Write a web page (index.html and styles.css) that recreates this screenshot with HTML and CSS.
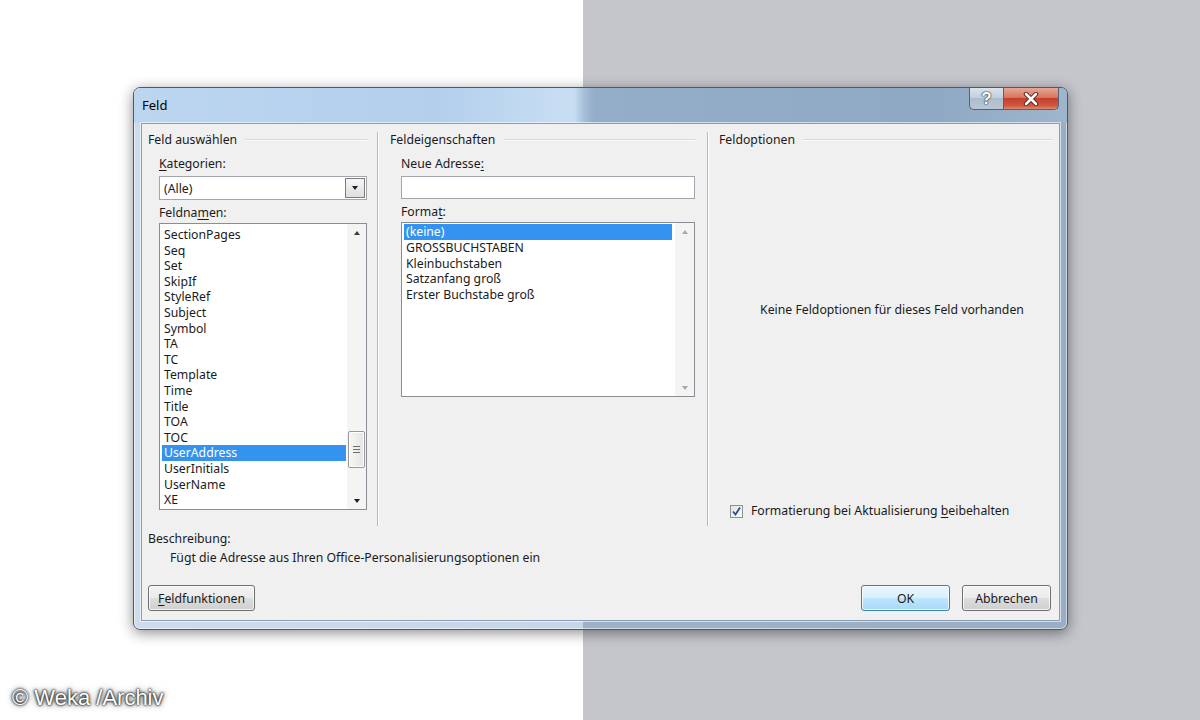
FILE: index.html
```html
<!DOCTYPE html>
<html lang="de">
<head>
  <meta charset="UTF-8" />
  <meta name="viewport" content="width=device-width, initial-scale=1.0"/>
  <title>Feld</title>
  <link rel="stylesheet" href="styles.css">
</head>
<body>

  <div class="dialog">
    <div class="titlebar">
      <span class="title">Feld</span>
      <div class="caption-buttons">
        <button class="cap-btn cap-help">?</button>
        <button class="cap-btn cap-close">
          <svg width="16" height="14" viewBox="0 0 16 14">
            <path d="M3 2 L13 12 M13 2 L3 12" stroke="#5a1d14" stroke-width="4.5" stroke-linecap="round"/>
            <path d="M3 2 L13 12 M13 2 L3 12" stroke="#ffffff" stroke-width="2.6" stroke-linecap="round"/>
          </svg>
        </button>
      </div>
    </div>

    <div class="client">
      <div class="groups">

        <!-- Feld auswählen -->
        <section class="group group-select">
          <div class="group-title">Feld auswählen</div>
          <div class="group-body">
            <div class="field-label"><u>K</u>ategorien:</div>
            <div class="combo">
              <span>(Alle)</span>
              <span class="combo-btn"><span class="tri-down"></span></span>
            </div>
            <div class="field-label label-gap">Feldna<u>m</u>en:</div>
            <div class="listbox names">
              <ul class="items">
                <li>SectionPages</li>
                <li>Seq</li>
                <li>Set</li>
                <li>SkipIf</li>
                <li>StyleRef</li>
                <li>Subject</li>
                <li>Symbol</li>
                <li>TA</li>
                <li>TC</li>
                <li>Template</li>
                <li>Time</li>
                <li>Title</li>
                <li>TOA</li>
                <li>TOC</li>
                <li class="selected">UserAddress</li>
                <li>UserInitials</li>
                <li>UserName</li>
                <li>XE</li>
              </ul>
              <div class="scrollbar">
                <div class="sb-arrow"><span class="tri-up"></span></div>
                <div class="sb-track">
                  <div class="sb-thumb names-thumb"><span class="grip"></span></div>
                </div>
                <div class="sb-arrow"><span class="tri-down"></span></div>
              </div>
            </div>
          </div>
        </section>

        <!-- Feldeigenschaften -->
        <section class="group group-props">
          <div class="group-title">Feldeigenschaften</div>
          <div class="group-body">
            <div class="field-label">Neue Adresse<u>:</u></div>
            <div class="textbox"></div>
            <div class="field-label label-gap">Forma<u>t</u>:</div>
            <div class="listbox formats">
              <ul class="items">
                <li class="selected">(keine)</li>
                <li>GROSSBUCHSTABEN</li>
                <li>Kleinbuchstaben</li>
                <li>Satzanfang groß</li>
                <li>Erster Buchstabe groß</li>
              </ul>
              <div class="scrollbar disabled">
                <div class="sb-arrow"><span class="tri-up"></span></div>
                <div class="sb-track"></div>
                <div class="sb-arrow"><span class="tri-down"></span></div>
              </div>
            </div>
          </div>
        </section>

        <!-- Feldoptionen -->
        <section class="group group-options">
          <div class="group-title">Feldoptionen</div>
          <div class="group-body">
            <div class="no-options">Keine Feldoptionen für dieses Feld vorhanden</div>
            <label class="check-row">
              <span class="checkbox">
                <svg width="11" height="11" viewBox="0 0 11 11">
                  <path d="M2 5.5 L4.5 8.5 L9 1.5" fill="none" stroke="#2b4f8c" stroke-width="1.8"/>
                </svg>
              </span>
              <span>Formatierung bei Aktualisierung <u>b</u>eibehalten</span>
            </label>
          </div>
        </section>
      </div>

      <div class="desc-title">Beschreibung:</div>
      <div class="desc-text">Fügt die Adresse aus Ihren Office-Personalisierungsoptionen ein</div>

      <div class="button-row">
        <button class="btn btn-wide"><u>F</u>eldfunktionen</button>
        <button class="btn btn-default push-right">OK</button>
        <button class="btn">Abbrechen</button>
      </div>
    </div>
  </div>

  <div class="watermark">© Weka /Archiv</div>

</body>
</html>
```

FILE: styles.css
```css
* {
  box-sizing: border-box;
}

body {
  margin: 0;
  height: 720px;
  overflow: hidden;
  font-family: 'Segoe UI', 'Noto Sans', sans-serif;
  font-size: 12.25px;
  color: #1a1a1a;
  background: linear-gradient(to right, #ffffff 0, #ffffff 583px, #c4c6cc 583px);
}

u {
  text-decoration: underline;
  text-underline-offset: 2px;
}

/* window frame */
.dialog {
  width: 935px;
  height: 543px;
  margin: 87px 0 0 133px;
  padding: 0 7px 8px;
  border: 1px solid #4b5a6b;
  border-radius: 7px;
  background: linear-gradient(to right, #cddcec 0, #c5d6e8 449px, #9db1c8 449px, #99aec6 100%);
  box-shadow: 0 3px 14px rgba(0, 0, 0, 0.45), inset 0 0 0 1px rgba(255, 255, 255, 0.55);
  display: flex;
  flex-direction: column;
}

.titlebar {
  height: 35px;
  margin: 0 -7px;
  padding: 0 8px 0 8px;
  display: flex;
  justify-content: space-between;
  border-radius: 6px 6px 0 0;
  background: linear-gradient(to right, #bcd6f0 0, #b3cfec 300px, #c8def3 440px, #a9c1da 449px, #94adc8 460px, #8fa8c3 800px, #9fb5cd 100%);
}

.title {
  padding-top: 9px;
  line-height: 16px;
  font-size: 13px;
  color: #000;
}

.caption-buttons {
  display: flex;
  height: 22px;
}

.cap-btn {
  height: 22px;
  border: 1px solid #4f6479;
  border-top: none;
  padding: 0;
  display: flex;
  align-items: center;
  justify-content: center;
  font-family: 'Liberation Sans', sans-serif;
}

.cap-help {
  width: 34px;
  border-right: none;
  border-radius: 0 0 0 5px;
  background: linear-gradient(#dbe3ec 0, #c4d0dd 45%, #aebdcd 50%, #b9c7d6 100%);
  color: #fff;
  font-size: 17px;
  font-weight: bold;
  text-shadow: 0 0 2px #2d3f52, 0 0 1px #2d3f52, 0 0 1px #2d3f52;
}

.cap-close {
  width: 56px;
  border-radius: 0 0 5px 0;
  background: linear-gradient(#e9a596 0, #d87561 45%, #c3402a 50%, #cf5a41 85%, #e08c70 100%);
}

/* client area */
.client {
  flex: 1;
  background: #f0f0f0;
  border: 1px solid #8b9cb0;
  box-shadow: 0 0 0 1px rgba(255, 255, 255, 0.6);
  padding: 8px 7px 9px 6px;
  display: flex;
  flex-direction: column;
}

.groups {
  display: flex;
  height: 394px;
}

.group {
  display: flex;
  flex-direction: column;
}

.group-select {
  width: 229px;
  padding-right: 10px;
}

.group-props {
  width: 330px;
  padding: 0 12px;
  border-left: 1px solid #b9b9b9;
  box-shadow: inset 1px 0 #ffffff;
}

.group-options {
  flex: 1;
  padding-left: 11px;
  border-left: 1px solid #b9b9b9;
  box-shadow: inset 1px 0 #ffffff;
}

.group-title {
  display: flex;
  align-items: center;
  line-height: 16px;
}

.group-title::after {
  content: '';
  flex: 1;
  margin-left: 8px;
  border-top: 1px solid #d8d8d8;
  border-bottom: 1px solid #fbfbfb;
}

.group-body {
  padding-left: 11px;
  display: flex;
  flex-direction: column;
}

.field-label {
  line-height: 16px;
  margin-top: 8px;
}

.field-label.label-gap {
  margin-top: 5px;
}

/* combo box and text box */
.combo {
  height: 24px;
  margin-top: 4px;
  padding-left: 4px;
  background: #fff;
  border: 1px solid #a3a6ad;
  display: flex;
  align-items: center;
}

.combo-btn {
  margin-left: auto;
  margin-right: 1px;
  width: 20px;
  height: 20px;
  border: 1px solid #7c7c7c;
  background: linear-gradient(#f6f6f6, #dedede);
  display: flex;
  align-items: center;
  justify-content: center;
}

.textbox {
  height: 23px;
  margin-top: 4px;
  background: #fff;
  border: 1px solid #a3a6ad;
}

/* list boxes */
.listbox {
  margin-top: 2px;
  background: #fff;
  border: 1px solid #8a8d94;
  display: flex;
}

.listbox.names {
  height: 287px;
}

.listbox.formats {
  height: 175px;
}

.items {
  flex: 1;
  list-style: none;
  margin: 0;
  padding: 3px 1px 0 2px;
  line-height: 15.6px;
  white-space: nowrap;
}

.formats .items {
  padding-top: 1px;
  line-height: 15.75px;
  padding-right: 3px;
}

.items li {
  padding-left: 2px;
}

.items li.selected {
  background: #3593f0;
  color: #ffffff;
}

.scrollbar {
  width: 19px;
  display: flex;
  flex-direction: column;
  background: #f4f4f4;
}

.sb-arrow {
  height: 17px;
  display: flex;
  align-items: center;
  justify-content: center;
}

.sb-track {
  flex: 1;
  padding: 0 1px;
}

.sb-thumb {
  height: 37px;
  border: 1px solid #979797;
  border-radius: 2px;
  background: linear-gradient(to right, #f6f6f6, #e4e4e4);
  box-shadow: inset 0 0 0 1px #ffffff;
  display: flex;
  align-items: center;
  justify-content: center;
}

.names-thumb {
  margin-top: 190px;
}

.grip {
  width: 7px;
  height: 7px;
  background: repeating-linear-gradient(#6e6e6e 0, #6e6e6e 1px, transparent 1px, transparent 3px);
}

.tri-up,
.tri-down {
  width: 0;
  height: 0;
  border-left: 3.5px solid transparent;
  border-right: 3.5px solid transparent;
}

.tri-up {
  border-bottom: 4px solid #3c3c3c;
}

.tri-down {
  border-top: 4px solid #1e1e1e;
}

.disabled .tri-up {
  border-bottom-color: #a8a8a8;
}

.disabled .tri-down {
  border-top-color: #a8a8a8;
}

/* field options */
.no-options {
  margin-top: 154px;
  line-height: 16px;
  text-align: center;
  padding-left: 2px;
}

.check-row {
  margin-top: 185px;
  display: flex;
  align-items: center;
  line-height: 16px;
}

.checkbox {
  width: 13px;
  height: 13px;
  margin-right: 8px;
  border: 1px solid #8e8f8f;
  background: linear-gradient(135deg, #dfe3e8, #fbfbfb);
  display: flex;
  align-items: center;
  justify-content: center;
}

/* description */
.desc-title {
  margin-top: 5px;
  line-height: 16px;
}

.desc-text {
  margin-top: 3px;
  padding-left: 22px;
  line-height: 16px;
}

/* buttons */
.button-row {
  margin-top: 19px;
  display: flex;
  gap: 12px;
  padding-right: 1px;
}

.btn {
  width: 89px;
  height: 26px;
  padding: 0;
  font-family: inherit;
  font-size: inherit;
  color: #1a1a1a;
  border: 1px solid #707070;
  border-radius: 3px;
  background: linear-gradient(#f3f3f3 0, #ebebeb 48%, #dddddd 52%, #cfcfcf 100%);
  box-shadow: inset 0 0 0 1px rgba(255, 255, 255, 0.75);
}

.btn-wide {
  width: 107px;
}

.btn-default {
  border-color: #3c7fb1;
  background: linear-gradient(#eaf6fd 0, #d9f0fc 48%, #bee6fd 52%, #a7d9f5 100%);
}

.push-right {
  margin-left: auto;
}

.watermark {
  margin: 56px 0 0 12px;
  font-family: 'Liberation Sans', Arial, sans-serif;
  font-size: 22px;
  line-height: 24px;
  color: #ffffff;
  text-shadow: 0 0 2px #000, 0 0 3px #222, 0 0 6px rgba(0, 0, 0, 0.7);
}
```
